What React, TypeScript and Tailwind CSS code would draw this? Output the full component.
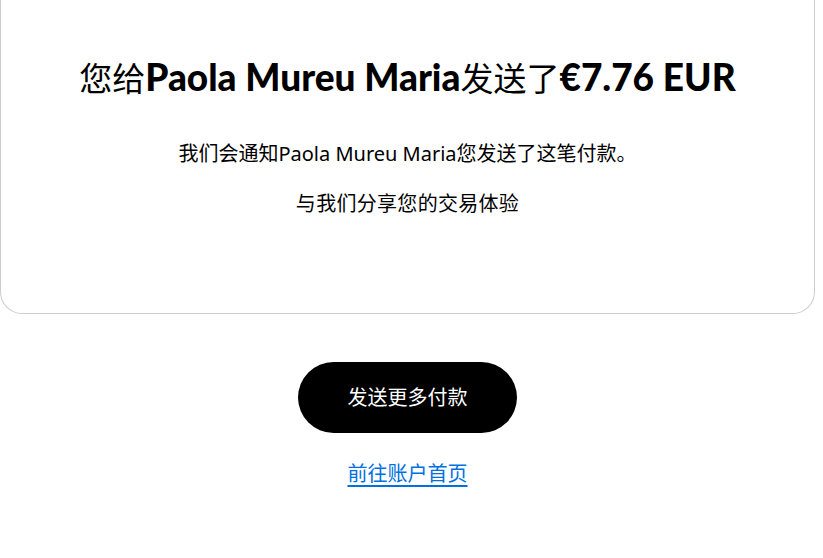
export default function App() {
  return (
    <div className="min-h-screen bg-white font-['Noto_Sans','Noto_Sans_CJK_SC',sans-serif] text-black">
      <div className="w-[815px] rounded-b-[22px] border-x border-b border-[#cccccc] px-6 pt-[57px] pb-[95px] text-center">
        <h1 className="h-[40px] text-[33px] leading-[40px]">
          您给<span className="font-['Lato','Noto_Sans_CJK_SC',sans-serif] text-[37px] font-black">Paola Mureu Maria</span>
          发送了<span className="font-['Lato','Noto_Sans_CJK_SC',sans-serif] text-[37px] font-black">€7.76 EUR</span>
        </h1>
        <p className="mt-[43px] text-[20px] leading-[28px]">我们会通知Paola Mureu Maria您发送了这笔付款。</p>
        <p className="mt-[22px] text-[20px] leading-[28px] tracking-[0.3px]">与我们分享您的交易体验</p>
      </div>
      <div className="flex w-[815px] flex-col items-center pt-[48px]">
        <button className="h-[71px] w-[219px] rounded-full bg-black text-[20px] text-white">
          发送更多付款
        </button>
        <a href="#" className="mt-[27px] text-[20px] leading-[28px] text-[#0070e0] underline underline-offset-4">
          前往账户首页
        </a>
      </div>
    </div>
  )
}
